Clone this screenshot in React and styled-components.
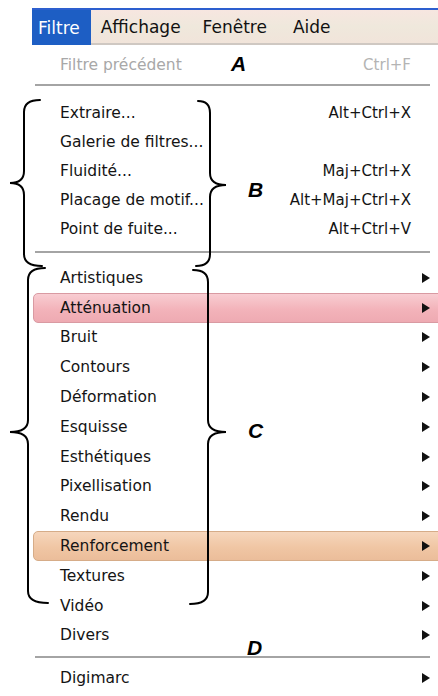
import React from "react";
import styled, { createGlobalStyle } from "styled-components";

const Global = createGlobalStyle`
  html, body { margin: 0; padding: 0; background: #fff; }
  body { font-family: "DejaVu Sans", "Liberation Sans", sans-serif; }
`;

const Page = styled.div`
  position: relative;
  width: 438px;
  height: 696px;
  overflow: hidden;
  background: #fff;
`;

const MenuBar = styled.div`
  margin: 8px 0 0 32px;
  height: 33px;
  display: flex;
  align-items: stretch;
  border-top: 2px solid #2d5fcf;
  border-bottom: 2px solid #cfc8c2;
  background: linear-gradient(#f7e6e0, #efe8dc 50%, #f1e4da);
  font-size: 17px;
  color: #111;
`;

const BarItem = styled.div`
  display: flex;
  align-items: center;
  padding: ${(p) => p.$pad || "0 11px"};
  background: ${(p) => (p.$active ? "#1d5ec4" : "transparent")};
  color: ${(p) => (p.$active ? "#fff" : "#111")};
  margin-bottom: ${(p) => (p.$active ? "-2px" : "0")};
`;

const Menu = styled.div`
  margin-left: 32px;
  padding-top: 5px;
  display: flex;
  flex-direction: column;
  font-size: 15.5px;
  color: #141414;
`;

const Row = styled.div`
  position: relative;
  height: ${(p) => p.$h}px;
  display: flex;
  align-items: center;
  padding-left: 28px;
  color: ${(p) => (p.$disabled ? "#a8a8a8" : "#141414")};
`;

const Band = styled.div`
  position: absolute;
  left: 1px;
  right: -2px;
  top: 50%;
  height: 28px;
  transform: translateY(-50%);
  border-radius: 5px 0 0 5px;
  border: 1px solid ${(p) => (p.$tone === "pink" ? "#d99aa2" : "#d6ac88")};
  background: ${(p) =>
    p.$tone === "pink"
      ? "linear-gradient(#f8cdd2, #f3b3ba 55%, #eeaab2)"
      : "linear-gradient(#f6d6bc, #f0c6a4 55%, #ebbd9a)"};
`;

const Label = styled.span`
  position: relative;
  flex: 1;
  white-space: nowrap;
`;

const Shortcut = styled.span`
  position: relative;
  margin-right: 27px;
  font-size: 15px;
  white-space: nowrap;
  color: ${(p) => (p.$disabled ? "#b4b4b4" : "#141414")};
`;

const ArrowCell = styled.span`
  position: relative;
  width: 27px;
  display: flex;
  justify-content: flex-end;
  padding-right: 8px;
  box-sizing: border-box;
`;

const Arrow = styled.span`
  width: 0;
  height: 0;
  border-left: 8px solid #111;
  border-top: 5.5px solid transparent;
  border-bottom: 5.5px solid transparent;
`;

const Separator = styled.div`
  height: 2px;
  margin: ${(p) => p.$m};
  margin-left: 3px;
  margin-right: 8px;
  background: #a4a4a4;
  border-bottom: 1px solid #fff;
`;

const Overlay = styled.svg`
  position: absolute;
  left: 0;
  top: 0;
  pointer-events: none;
`;

const Letter = styled.span`
  position: absolute;
  font-family: "Liberation Sans", Arial, sans-serif;
  font-weight: bold;
  font-style: italic;
  font-size: 21px;
  line-height: 1;
  color: #000;
  transform: translateY(-50%);
`;

const groupB = [
  ["Extraire...", "Alt+Ctrl+X"],
  ["Galerie de filtres...", ""],
  ["Fluidité...", "Maj+Ctrl+X"],
  ["Placage de motif...", "Alt+Maj+Ctrl+X"],
  ["Point de fuite...", "Alt+Ctrl+V"],
];

const groupC = [
  ["Artistiques"],
  ["Atténuation", "pink"],
  ["Bruit"],
  ["Contours"],
  ["Déformation"],
  ["Esquisse"],
  ["Esthétiques"],
  ["Pixellisation"],
  ["Rendu"],
  ["Renforcement", "peach"],
  ["Textures"],
  ["Vidéo"],
  ["Divers"],
];

function brace(top, v, tipX, tipY, bottom, x1, x2) {
  const r = 12;
  return `M ${x1} ${top} Q ${v} ${top} ${v} ${top + r} L ${v} ${tipY - r} Q ${v} ${tipY} ${tipX} ${tipY} Q ${v} ${tipY} ${v} ${tipY + r} L ${v} ${bottom - r} Q ${v} ${bottom} ${x2} ${bottom}`;
}

export default function App() {
  return (
    <Page>
      <Global />
      <MenuBar>
        <BarItem $pad="0 11px 0 6px" $active>Filtre</BarItem>
        <BarItem $pad="0 10px">Affichage</BarItem>
        <BarItem $pad="0 12px 0 12px">Fenêtre</BarItem>
        <BarItem $pad="0 12px 0 14px">Aide</BarItem>
      </MenuBar>
      <Menu>
        <Row $h={30} $disabled>
          <Label>Filtre précédent</Label>
          <Shortcut $disabled>Ctrl+F</Shortcut>
        </Row>
        <Separator $m="4px 0 11px" />
        {groupB.map(([l, s]) => (
          <Row key={l} $h={29}>
            <Label>{l}</Label>
            {s && <Shortcut>{s}</Shortcut>}
          </Row>
        ))}
        <Separator $m="8px 0 9px" />
        {groupC.map(([l, tone]) => (
          <Row key={l} $h={29.8}>
            {tone && <Band $tone={tone} />}
            <Label>{l}</Label>
            <ArrowCell>
              <Arrow />
            </ArrowCell>
          </Row>
        ))}
        <Separator $m="6px 0 4px" />
        <Row $h={29.8}>
          <Label>Digimarc</Label>
          <ArrowCell>
            <Arrow />
          </ArrowCell>
        </Row>
      </Menu>

      <Overlay width="438" height="696" viewBox="0 0 438 696">
        <g fill="none" stroke="#000" strokeWidth="2" strokeLinecap="round">
          <path d={brace(100, 24, 10, 183, 266, 40, 42)} />
          <path d={brace(101, 210, 226, 185, 266, 198, 196)} />
          <path d={brace(268, 28, 10, 432, 603, 45, 48)} />
          <path d={brace(270, 208, 226, 432, 604, 193, 190)} />
        </g>
      </Overlay>
      <Letter style={{ left: 231, top: 63 }}>A</Letter>
      <Letter style={{ left: 248, top: 189 }}>B</Letter>
      <Letter style={{ left: 248, top: 430 }}>C</Letter>
      <Letter style={{ left: 247, top: 647 }}>D</Letter>
    </Page>
  );
}
